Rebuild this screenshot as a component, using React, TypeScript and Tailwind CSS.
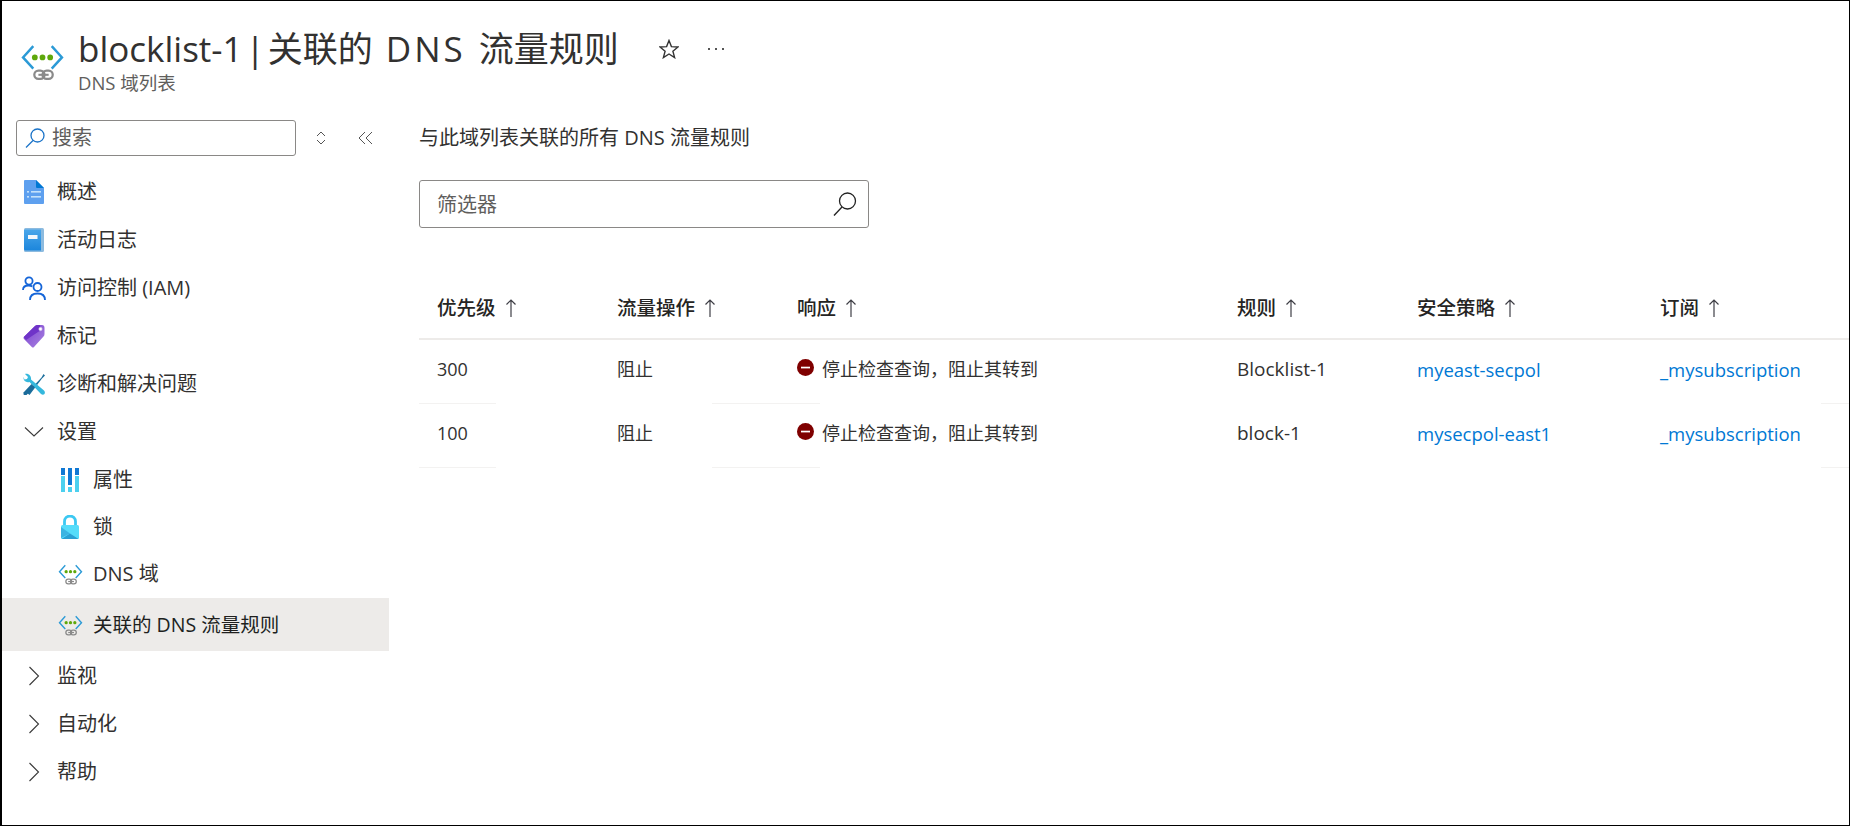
import React from "react";

const DnsIcon = ({ className }: { className: string }) => (
  <svg viewBox="0 0 42 38" className={className} fill="none">
    <path d="M12 4 L2 15 L12 26" stroke="#2b9ad6" strokeWidth="2.4" />
    <path d="M30 4 L40 15 L30 26" stroke="#2b9ad6" strokeWidth="2.4" />
    <circle cx="13.5" cy="15" r="2.8" fill="#5ea80c" />
    <circle cx="21" cy="15" r="2.8" fill="#5ea80c" />
    <circle cx="28.5" cy="15" r="2.8" fill="#5ea80c" />
    <rect x="13" y="28" width="10" height="8" rx="4" stroke="#8a8a8a" strokeWidth="2.2" />
    <rect x="21" y="28" width="10" height="8" rx="4" stroke="#8a8a8a" strokeWidth="2.2" />
    <path d="M17 32H27" stroke="#8a8a8a" strokeWidth="2" />
  </svg>
);

const DocIcon = () => (
  <svg viewBox="0 0 20 24" className="w-[20px] h-[24px]">
    <path d="M1 0H12L20 8V23a1 1 0 0 1-1 1H1a1 1 0 0 1-1-1V1a1 1 0 0 1 1-1Z" fill="#5ea0ef" />
    <path d="M12 0L20 8H13a1 1 0 0 1-1-1Z" fill="#0078d4" />
    <rect x="7" y="11" width="10" height="1.6" fill="#c3e1fb" />
    <rect x="7" y="16" width="10" height="1.6" fill="#c3e1fb" />
    <rect x="3" y="11" width="2" height="1.6" fill="#c3e1fb" />
    <rect x="3" y="16" width="2" height="1.6" fill="#c3e1fb" />
  </svg>
);

const BookIcon = () => (
  <svg viewBox="0 0 20 24" className="w-[20px] h-[24px]">
    <defs>
      <linearGradient id="bk" x1="0" y1="0" x2="0" y2="1">
        <stop offset="0" stopColor="#4aa6ea" />
        <stop offset="1" stopColor="#1c86dc" />
      </linearGradient>
    </defs>
    <rect x="0" y="0" width="20" height="24" rx="1.5" fill="#8dbbdf" />
    <path d="M1 1.500h16v21H1.500a1.500 1.500 0 0 1-1.500-1.500V2Z" fill="url(#bk)" />
    <rect x="4" y="7" width="9.500" height="4" fill="#f2f7fc" />
  </svg>
);

const PeopleIcon = () => (
  <svg viewBox="0 0 24 24" className="w-[24px] h-[24px]" fill="none" stroke="#1565d8" strokeWidth="1.8">
    <circle cx="7" cy="5" r="3.600" />
    <path d="M1 14c0-3 2.500-4.500 5.500-4.500 1.500 0 2.800.3 3.800 1" />
    <circle cx="15.500" cy="11" r="4" />
    <path d="M8 24c0-4.500 3-6.500 7.500-6.500S23 19.500 23 24" />
  </svg>
);

const TagIcon = () => (
  <svg viewBox="0 0 22 23" className="w-[22px] h-[23px]">
    <defs>
      <linearGradient id="tg" x1="0" y1="0" x2="1" y2="1">
        <stop offset="0" stopColor="#7a3ed0" />
        <stop offset="1" stopColor="#a985e0" />
      </linearGradient>
    </defs>
    <path d="M0.800 12 L12 1 Q13 0 14.500 0 H19 Q21.500 0 21.500 3 V9 Q21.500 10.500 20.500 11.500 L11 22 Q10 23 8.800 22 L1 14 Q0 13 .8 12Z" fill="url(#tg)" />
    <path d="M0.800 12 L12 1 Q13 0 14.500 0 H17 L18 5 L3 15Z" fill="#6f33c8" />
    <circle cx="17.500" cy="4" r="1.700" fill="#fff" stroke="#c9b5ea" strokeWidth=".6" />
  </svg>
);

const ToolIcon = () => (
  <svg viewBox="0 0 22 22" className="w-[22px] h-[22px]">
    <path d="M4 20 L18.500 4.500 L20.500 1 L22 2.500 L19 5.500 L6.500 22Z" fill="#1d6f9d" />
    <path d="M21 17.500 L8 6.500 C8.500 3 5.500 0 2 1 L5 4 L4 6 L1.500 6.500 L.5 4 C0 8 3 10 6.500 9 L18 21 Q20 22.500 21.500 21 Q22.500 19 21 17.500Z" fill="#35b8dd" />
    <path d="M.5 19.500 L8.500 11 L11.500 14 L3.500 22 Q1.500 22.500 .5 21.500Z" fill="#1b6b9a" />
  </svg>
);

const BarsIcon = () => (
  <svg viewBox="0 0 18 24" className="w-[18px] h-[24px]">
    <rect x="0" y="0" width="4" height="7" fill="#0f78d4" />
    <rect x="0" y="8" width="4" height="16" fill="#4cd0ef" />
    <rect x="7" y="0" width="4" height="17" fill="#0f78d4" />
    <rect x="7" y="19" width="4" height="5" fill="#4cd0ef" />
    <rect x="14" y="0" width="4" height="7" fill="#0f78d4" />
    <rect x="14" y="8" width="4" height="16" fill="#4cd0ef" />
  </svg>
);

const LockIcon = () => (
  <svg viewBox="0 0 18 24" className="w-[18px] h-[24px]">
    <path d="M3.500 11V6.500a5.500 5.500 0 0 1 11 0V11" fill="none" stroke="#3cc8f2" strokeWidth="2.800" />
    <rect x="0" y="10" width="18" height="14" rx="1.500" fill="#55dcfa" />
    <path d="M0 12 L9 18.500 L0 23Z" fill="#3bb4e2" />
    <path d="M0.500 24 L9 18.500 L17.500 24Z" fill="#2aa0d4" />
  </svg>
);

const Chevron = ({ open }: { open?: boolean }) => (
  <svg viewBox="0 0 20 20" className="w-[20px] h-[20px]" fill="none" stroke="#3a3a3a" strokeWidth="1.100">
    {open ? <path d="M1 5.500 L10 14 L19 5.500" /> : <path d="M5.500 1 L14.500 10 L5.500 19" />}
  </svg>
);

const SortUp = () => (
  <svg viewBox="0 0 12 20" className="w-[12px] h-[20px]" fill="none" stroke="#3f3f46" strokeWidth="1.200">
    <path d="M6 19V2M1.500 6.500 L6 2 L10.500 6.500" />
  </svg>
);

const StopIcon = () => (
  <svg viewBox="0 0 17 17" className="w-[17px] h-[17px]">
    <circle cx="8.500" cy="8.500" r="8.500" fill="#7f0000" />
    <rect x="4" y="7.700" width="9" height="1.700" fill="#fff" />
  </svg>
);

const navTop: [React.ReactNode, string][] = [
  [<DocIcon />, "概述"],
  [<BookIcon />, "活动日志"],
  [<PeopleIcon />, "访问控制 (IAM)"],
  [<TagIcon />, "标记"],
  [<ToolIcon />, "诊断和解决问题"],
];

const navSub: [React.ReactNode, string, string][] = [
  [<BarsIcon />, "属性", "h-[47px]"],
  [<LockIcon />, "锁", "h-[47px]"],
  [<DnsIcon className="w-[25px] h-[22px]" />, "DNS 域", "h-[48px]"],
];

const columns = [
  ["优先级", "w-[180px]"],
  ["流量操作", "w-[180px]"],
  ["响应", "w-[440px]"],
  ["规则", "w-[180px]"],
  ["安全策略", "w-[243px]"],
  ["订阅", "flex-1"],
];

const rows = [
  ["300", "Blocklist-1", "myeast-secpol"],
  ["100", "block-1", "mysecpol-east1"],
];

const RowLine = () => (
  <div className="flex h-px">
    <div className="w-[77px] bg-[#f3f2f1]" />
    <div className="w-[216px]" />
    <div className="w-[108px] bg-[#f3f2f1]" />
    <div className="w-[1001px]" />
    <div className="flex-1 bg-[#f3f2f1]" />
  </div>
);

export default function App() {
  return (
    <div className="w-[1850px] h-[826px] overflow-hidden bg-white border border-l-2 border-black text-[#323130] font-['Open_Sans','Noto_Sans_CJK_SC',sans-serif] flex flex-col">
      <header className="h-[118px] flex pl-[19px] pt-[23px] shrink-0">
        <DnsIcon className="w-[43px] h-[39px] mt-[18px]" />
        <div className="ml-[14px]">
          <div className="flex items-center h-[50px]">
            <h1 className="text-[35px] leading-[50px] whitespace-nowrap">
              blocklist-1<span className="mx-[3px]">|</span>关联的<span className="tracking-[3px] mx-[13px]">DNS</span>流量规则
            </h1>
            <svg viewBox="0 0 20 20" className="w-[20px] h-[20px] ml-[40px]" fill="none" stroke="#333" strokeWidth="1.400">
              <path d="M10 1.500 L12.400 7.600 L19 8 L13.900 12.200 L15.600 18.600 L10 15 L4.400 18.600 L6.100 12.200 L1 8 L7.600 7.600Z" />
            </svg>
            <div className="ml-[29px] flex gap-[5px]">
              <span className="w-[2px] h-[2px] bg-[#555]" />
              <span className="w-[2px] h-[2px] bg-[#555]" />
              <span className="w-[2px] h-[2px] bg-[#555]" />
            </div>
          </div>
          <div className="text-[18.500px] leading-[24px] text-[#605e5c] mt-[-3px]">DNS 域列表</div>
        </div>
      </header>
      <div className="flex flex-1 min-h-0">
        <aside className="w-[387px] shrink-0">
          <div className="flex items-center pl-[14px] h-[36px] mt-[1px]">
            <div className="w-[280px] h-[36px] border border-[#8a8886] rounded-[3px] flex items-center pl-[8px]">
              <svg viewBox="0 0 20 20" className="w-[20px] h-[20px]" fill="none" stroke="#1a73c8" strokeWidth="1.300">
                <circle cx="12.500" cy="7.500" r="6.500" />
                <path d="M8 12.500 L1 19.500" />
              </svg>
              <span className="ml-[7px] text-[20px] text-[#605e5c]">搜索</span>
            </div>
            <svg viewBox="0 0 12 16" className="w-[12px] h-[16px] ml-[19px]" fill="none" stroke="#555" strokeWidth="1">
              <path d="M2 6 L6 2 L10 6M2 10 L6 14 L10 10" />
            </svg>
            <svg viewBox="0 0 16 14" className="w-[16px] h-[14px] ml-[31px]" fill="none" stroke="#555" strokeWidth="1">
              <path d="M7 1 L1 7 L7 13M14 1 L8 7 L14 13" />
            </svg>
          </div>
          <nav className="mt-[12px] text-[20px]">
            {navTop.map(([icon, label]) => (
              <div key={label} className="h-[48px] flex items-center">
                <div className="w-[55px] flex justify-center pl-[14px] pr-[5px]">{icon}</div>
                <span>{label}</span>
              </div>
            ))}
            <div className="h-[48px] flex items-center">
              <div className="w-[55px] flex justify-center pl-[14px] pr-[5px]"><Chevron open /></div>
              <span>设置</span>
            </div>
            {navSub.map(([icon, label, height]) => (
              <div key={label} className={`${height} flex items-center`}>
                <div className="w-[91px] flex justify-center pl-[52px] pr-[7px]">{icon}</div>
                <span>{label}</span>
              </div>
            ))}
            <div className="h-[53px] flex items-center bg-[#edebe9] text-[#201f1e]">
              <div className="w-[91px] flex justify-center pl-[52px] pr-[7px]">
                <DnsIcon className="w-[25px] h-[22px]" />
              </div>
              <span className="text-[19.500px]">关联的 DNS 流量规则</span>
            </div>
            <div className="mt-[1px]">
              {["监视", "自动化", "帮助"].map((label) => (
                <div key={label} className="h-[48px] flex items-center">
                  <div className="w-[55px] flex justify-center pl-[14px] pr-[5px]"><Chevron /></div>
                  <span>{label}</span>
                </div>
              ))}
            </div>
          </nav>
        </aside>
        <main className="flex-1 pl-[30px] min-w-0">
          <p className="text-[20px] leading-[28px] mt-[5px]">与此域列表关联的所有 DNS 流量规则</p>
          <div className="mt-[28px] w-[450px] h-[48px] border border-[#8a8886] rounded-[3px] flex items-center justify-between pl-[17px] pr-[11px]">
            <span className="text-[20px] text-[#605e5c] mt-[2px]">筛选器</span>
            <svg viewBox="0 0 24 24" className="w-[24px] h-[24px]" fill="none" stroke="#222" strokeWidth="1.300">
              <circle cx="14.500" cy="9" r="8" />
              <path d="M9 15 L1 23.500" />
            </svg>
          </div>
          <div className="mt-[47px]">
            <div className="flex h-[65px] items-center pl-[18px] pt-[2px] border-b-2 border-[#edebe9] text-[19.500px] font-medium text-[#252423]">
              {columns.map(([name, width]) => (
                <div key={name} className={`${width} flex items-center gap-[9px]`}>
                  <span>{name}</span>
                  <SortUp />
                </div>
              ))}
            </div>
            {rows.map(([priority, rule, policy]) => (
              <div key={priority}>
                <div className="flex h-[63px] items-center pl-[18px] pb-[4px] text-[18px]">
                  <div className="w-[180px]">{priority}</div>
                  <div className="w-[180px]">阻止</div>
                  <div className="w-[440px] flex items-center gap-[8px]">
                    <span className="-mt-[4px]"><StopIcon /></span>
                    <span>停止检查查询，阻止其转到</span>
                  </div>
                  <div className="w-[180px] text-[19px]">{rule}</div>
                  <div className="w-[243px] text-[18.500px] text-[#0078d4]">{policy}</div>
                  <div className="flex-1 text-[18.500px] text-[#0078d4]">_mysubscription</div>
                </div>
                <RowLine />
              </div>
            ))}
          </div>
        </main>
      </div>
    </div>
  );
}
